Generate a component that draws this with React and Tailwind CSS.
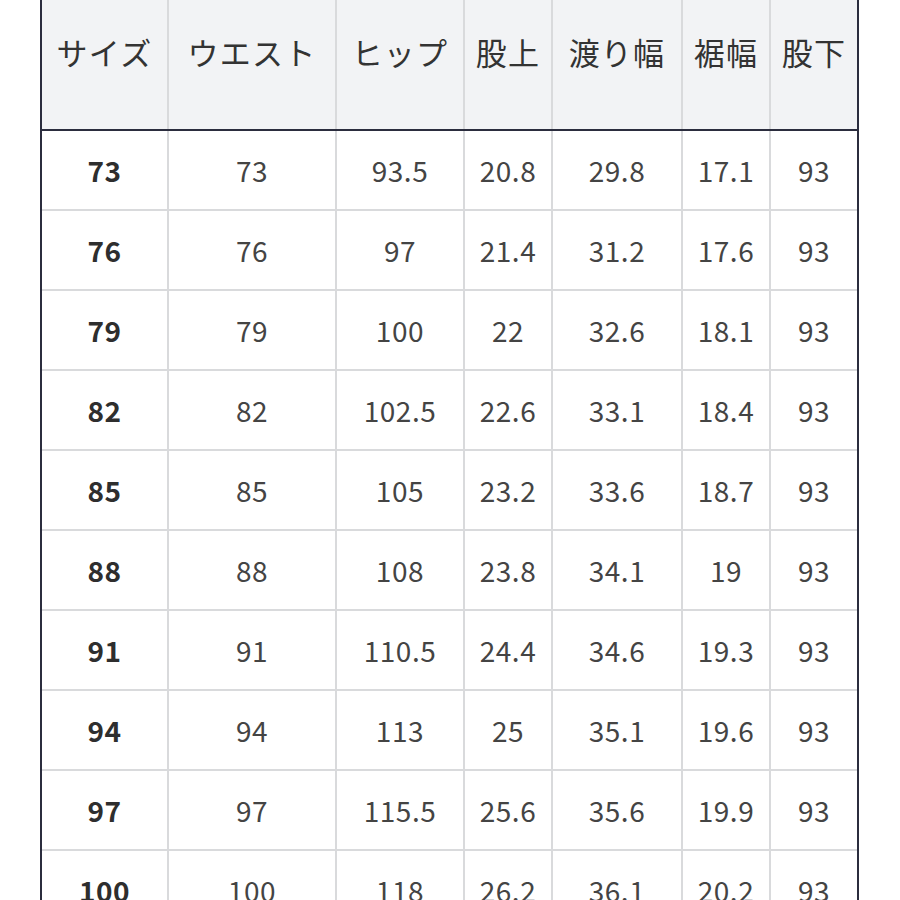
import React from "react";

const headers = ["サイズ", "ウエスト", "ヒップ", "股上", "渡り幅", "裾幅", "股下"];

const rows = [
  ["73", "73", "93.5", "20.8", "29.8", "17.1", "93"],
  ["76", "76", "97", "21.4", "31.2", "17.6", "93"],
  ["79", "79", "100", "22", "32.6", "18.1", "93"],
  ["82", "82", "102.5", "22.6", "33.1", "18.4", "93"],
  ["85", "85", "105", "23.2", "33.6", "18.7", "93"],
  ["88", "88", "108", "23.8", "34.1", "19", "93"],
  ["91", "91", "110.5", "24.4", "34.6", "19.3", "93"],
  ["94", "94", "113", "25", "35.1", "19.6", "93"],
  ["97", "97", "115.5", "25.6", "35.6", "19.9", "93"],
  ["100", "100", "118", "26.2", "36.1", "20.2", "93"],
];

const GRID = "grid grid-cols-[127px_168px_128px_88px_130px_88px_86px]";

export default function App() {
  return (
    <div className="h-[900px] w-[900px] overflow-hidden bg-white font-['Noto_Sans_CJK_JP','Noto_Sans',sans-serif] text-[#333]">
      <div className="ml-[40px] w-[819px] border-x-2 border-[#2b2d3e]">
        <div className={`${GRID} h-[131px] border-b-2 border-[#2b2d3e] bg-[#f2f3f5]`}>
          {headers.map((h, i) => (
            <div
              key={h}
              className={`flex justify-center pt-[30px] text-[31px] leading-[44px] tracking-[0.04em] ${
                i < headers.length - 1 ? "border-r-2 border-[#d9dadc]" : ""
              }`}
            >
              {h}
            </div>
          ))}
        </div>
        {rows.map((row) => (
          <div key={row[0]} className={`${GRID} h-[80px] border-b-2 border-[#d9dadc]`}>
            {row.map((v, i) => (
              <div
                key={i}
                className={`flex items-center justify-center text-[28px] tracking-[0.02em] ${
                  i === 0 ? "font-semibold text-[#2e2e2e]" : "text-[#444]"
                } ${i < row.length - 1 ? "border-r-2 border-[#d9dadc]" : ""}`}
              >
                {v}
              </div>
            ))}
          </div>
        ))}
      </div>
    </div>
  );
}
